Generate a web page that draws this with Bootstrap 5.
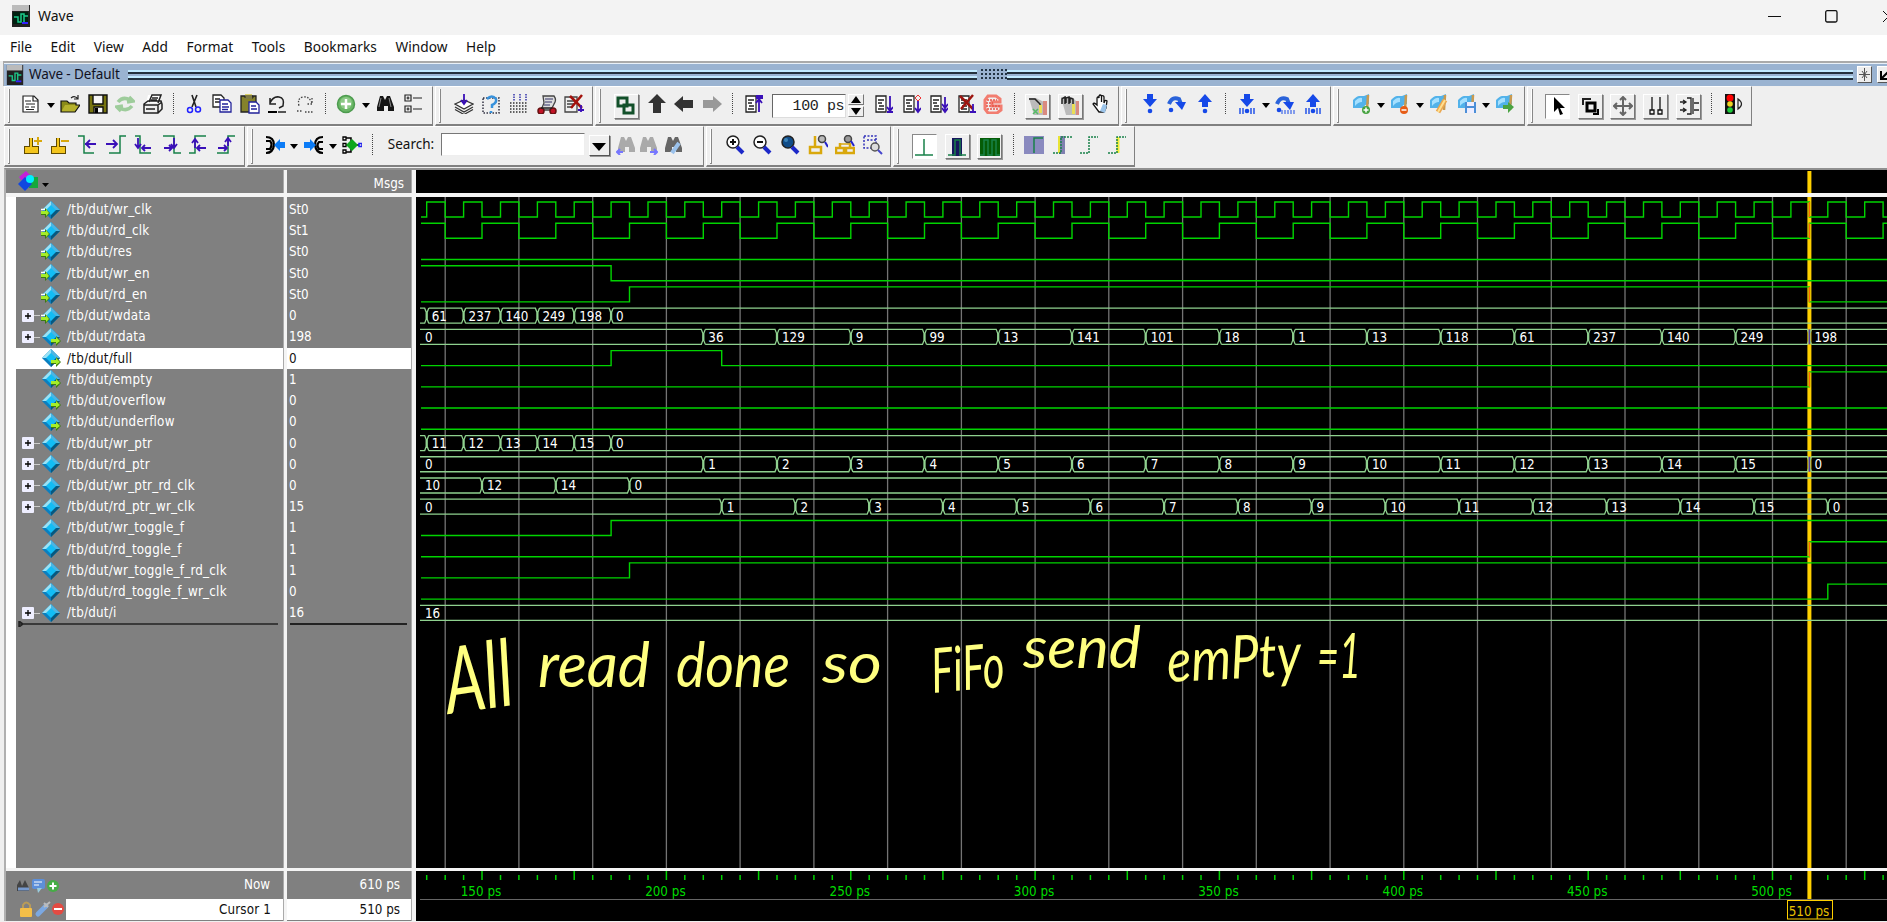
<!DOCTYPE html>
<html lang="en">
<head>
<meta charset="utf-8">
<title>Wave</title>
<link href="https://cdn.jsdelivr.net/npm/bootstrap@5.3.0/dist/css/bootstrap.min.css" rel="stylesheet">
<script src="https://cdn.jsdelivr.net/npm/bootstrap@5.3.0/dist/js/bootstrap.bundle.min.js"></script>
<style>
html,body{height:100%}
body{font:14px/1 "Noto Sans","Open Sans",sans-serif;color:#111;background:#efefef;overflow:hidden}
svg{display:block;flex:none}
.titlebar{height:35px;background:#f3f3f3;padding:0 0 3px 12px}
.titlebar .caption{font-size:14px;margin-left:8px}
.winbtns{gap:44px;margin-right:-8px}
.menus{height:26px;background:#fff;padding:0 0 2px 10px;gap:18.5px;font-size:13.7px;letter-spacing:.04px}
.dock{height:25px;border-top:2px solid #aaa;background:#9ab3d1;margin-left:3px;border-left:1px solid #aaa;box-shadow:inset 0 1px #e8f0f8}
.dock .dtitle{font-size:13.5px;color:#112;letter-spacing:-.1px;margin:0 7px 0 5px;width:92px;white-space:nowrap}
.grooves{height:10px;background:linear-gradient(#c2eaff 0 2px,#24313d 2px 4px,#9ab3d1 4px 6px,#c2eaff 6px 8px,#24313d 8px 10px)}
.dots{width:26px;height:11px;background:radial-gradient(circle at 1px 1px,#234 1px,transparent 1.2px) 0 0/4px 4px}
.mini{width:15px;height:17px;background:#eee;border:1px solid;border-color:#fff #555 #555 #fff}
.toolrow{height:40px;margin-left:4px;gap:2px}
.tbar{border:1px solid;border-color:#fff #808080 #808080 #fff;border-bottom-width:2px;padding-bottom:3px;position:relative}
.tbar::before{content:"";position:absolute;left:3px;top:2px;bottom:1px;width:2px;border-right:1px solid #888;border-bottom:1px solid #888;background:#fff}
.cell{width:27.6px;display:flex;justify-content:center;flex:none}
.cell.half{width:22px}
.drop{width:11px;flex:none;display:flex;justify-content:center}
.drop i,.combo i{border:4px solid transparent;border-top:5px solid #000;border-bottom:0;margin-top:3px}
.vsep{width:14px;flex:none;height:22px;background:repeating-linear-gradient(#444 0 1px,#efefef 1px 2px) center/1px 100% no-repeat}
.bcell{width:32.8px;flex:none;display:flex;justify-content:center;margin-top:4px}
.bcell span{width:25px;height:25px;border:1px solid;border-color:#fff #777 #777 #fff;box-shadow:1px 1px #999;display:grid;place-items:center}
.bcell.on span{background:#fff;border-color:#888 #fff #fff #888;box-shadow:none}
.timebox{width:74px;height:24px;margin:4px 2px 0 5px;background:#fff;border:1px solid;border-color:#666 #ddd #ddd #666;font:15px/23px "Liberation Mono",monospace;text-align:right;padding-right:1px;letter-spacing:-.4px;color:#222}
.spin{width:16px;margin:3px 5px 0 0;gap:1px}
.spin b{height:11px;border:1px solid;border-color:#fff #777 #777 #fff;display:grid;place-items:center}
.searchbox{width:144px;height:23px;background:#fff;border:1px solid;border-color:#777 #eee #eee #777}
.combo{width:21px;height:21px;margin:2px 5px 0 4px;border:1px solid;border-color:#fff #555 #555 #fff;box-shadow:1px 1px #999;display:grid;place-items:center}
.combo i{border-width:8px 7px 0!important;margin:2px 0 0}
.panes{margin-left:4px;height:753px;border-top:2px solid #909090;border-left:2px solid #b0b0b0;display:grid;grid-template-columns:278px 3px 125px 4px 1fr;grid-template-rows:23px 4px 671px 3px 50px;background:#f4f4f4}
.sig{font-family:"DejaVu Sans Condensed","DejaVu Sans",sans-serif;font-size:13.3px;color:#fff}
.g{background:#808080}
.sigrow{height:21.24px;padding-left:6px}
.sigrow .pm{width:12px;height:12px;background:#eef;border-radius:1px;display:grid;place-items:center}
.sigrow .link{width:6px;height:1px;background:#ccc}
.sigrow .nm{margin-left:6px;white-space:nowrap;letter-spacing:.22px}
.sel{background:#fff;color:#111}
.valrow{height:21.24px;padding-left:2px;letter-spacing:-.1px}
.endline{height:2px;background:#222}
.ed{border-right:1px solid #aaa}
</style>
</head>
<body>
<div class="d-flex flex-column">
<header class="titlebar d-flex align-items-center">
<svg width="18" height="22" viewBox="0 0 18 22"><path d="M0 0h18v22H0z" fill="#222"/><path d="M0 0h17v6H0z" fill="#bbb"/><path d="M1 7h15v12H1z" fill="#021"/><path d="M2 12h4v5h3V9h3v8M12 11h4" stroke="#1cc98a" stroke-width="1.500" fill="none"/><path d="M10 18h6" stroke="#32f" stroke-width="2"/></svg>
<span class="caption">Wave</span>
<div class="winbtns d-flex align-items-center ms-auto"><svg width="13" height="13"><path d="M0 6.5h13" stroke="#111"/></svg><svg width="13" height="13"><rect x=".7" y=".7" width="11.3" height="11.3" rx="1.5" fill="none" stroke="#111" stroke-width="1.3"/></svg><svg width="13" height="13"><path d="M1 1l11 11M12 1L1 12" stroke="#111"/></svg></div>
</header>
<nav class="menus d-flex align-items-center"><span>File</span><span>Edit</span><span>View</span><span>Add</span><span>Format</span><span>Tools</span><span>Bookmarks</span><span>Window</span><span>Help</span></nav>
<div class="dock d-flex align-items-center">
<svg width="18" height="20" viewBox="0 0 18 22" style="margin-left:2px"><path d="M0 0h18v22H0z" fill="#222"/><path d="M0 0h17v6H0z" fill="#bbb"/><path d="M2 12h4v5h3V9h3v8M12 11h4" stroke="#1cc98a" stroke-width="1.500" fill="none"/><path d="M10 18h6" stroke="#32f" stroke-width="2"/></svg>
<span class="dtitle">Wave - Default</span><div class="grooves" style="width:849px"></div><div class="dots ms-1"></div><div class="grooves flex-grow-1"></div>
<div class="mini ms-1"><svg width="13" height="15"><path d="M6.500 1v13M1 7.500h11M4 4l5 7M9 4l-5 7" stroke="#555"/></svg></div><div class="mini" style="margin:0 -5px 0 5px"><svg width="13" height="15"><path d="M3 4v8h7M4 11l8-8" stroke="#000" stroke-width="2" fill="none"/></svg></div>
</div>
<div class="toolrow d-flex" id="row1"></div>
<div class="toolrow d-flex" id="row2" style="height:41px"></div>
<main class="panes" style="margin-top:1px">
<div class="g ed d-flex align-items-center"><svg class="ms-2" style="margin-left:12px!important" width="34" height="21"><path d="M1 6l7-6 6 6-4 3H3z" fill="#c320d8"/><path d="M12 6h8v11h-9z" fill="#14a83c"/><path d="M7 6l7 7-7 7-7-7z" fill="#1048e0"/><circle cx="12" cy="8" r="4" fill="#0ef"/><path d="M24 12h7l-3.500 4z"/></svg></div><div></div>
<div class="g ed sig d-flex align-items-center justify-content-end pt-1" style="padding-right:7px">Msgs</div><div></div>
<svg id="head" width="1471" height="23" viewBox="416 170 1471 23"></svg>
<div></div><div></div><div></div><div></div><div></div>
<div class="g ed sig" style="border-left:10px solid #fff" id="names"></div><div></div>
<div class="g ed sig" id="vals"></div><div></div>
<svg id="wave" width="1471" height="671" viewBox="416 197 1471 671"></svg>
<div></div><div></div><div></div><div></div><div></div>
<div class="g ed sig d-flex flex-column"><div class="d-flex align-items-center justify-content-between" style="height:28px;padding:0 13px 0 11px"><svg width="44" height="17"><path d="M0 12V8l3-5 2 6 3-6 4 8v3H0z" fill="#444"/><path d="M1 12h11" stroke="#79c" stroke-width="3"/><rect x="15" y="2" width="13" height="10" rx="2" fill="#5d8fd8"/><path d="M17 5h8M17 8h5" stroke="#fff"/><path d="M20 11h5l-4 5z" fill="#9cd"/><circle cx="36" cy="9" r="6" fill="#46ad46"/><path d="M36 5.500v7M32.500 9h7" stroke="#fff" stroke-width="2"/></svg><span>Now</span></div>
<div class="d-flex" style="height:21px"><svg width="60" height="21"><path d="M17 10V6q3-5 7 0v4" stroke="#b99b57" fill="none" stroke-width="2"/><rect x="14" y="9" width="12" height="9" rx="1" fill="#f4be48"/><path d="M32 15l8-8" stroke="#7ba8e2" stroke-width="5" stroke-linecap="round"/><path d="M38 8l6-5M38 4l4 4" stroke="#bbb" stroke-width="2"/><circle cx="52" cy="10" r="6" fill="#e34a42"/><path d="M48 10h8" stroke="#fff" stroke-width="2"/></svg><div class="sel flex-grow-1 d-flex align-items-center justify-content-end" style="padding-right:12px;letter-spacing:.15px">Cursor 1</div></div></div><div></div>
<div class="g ed sig d-flex flex-column"><div class="d-flex align-items-center justify-content-end" style="height:28px;padding-right:11px">610 ps</div><div class="sel d-flex align-items-center justify-content-end" style="height:21px;padding-right:11px">510 ps</div></div><div></div>
<svg id="ruler" width="1471" height="50" viewBox="416 871 1471 50"></svg>
</main>
</div>
<script>
const P=(d,c='#000',w=1.5,f='none')=>`<path d="${d}" stroke="${c}" stroke-width="${w}" fill="${f}"/>`;
const F=(d,c='#000')=>`<path d="${d}" fill="${c}"/>`;
const C=(x,y,r,c,s='none')=>`<circle cx="${x}" cy="${y}" r="${r}" fill="${c}" stroke="${s}" stroke-width="1.5"/>`;
const doc=F('M3 2h11v16H3z','#fff')+P('M3 2h10v16H3zM5 6h6M5 9h4M6 12h5M5 15h6','#222',1.3);
const flag=F('M1 6q4-4 6-4h5l5-2v10q-4 0-6 4H1z','#52b2ea')+F('M3 7q4-4 7-3v4q-4 0-7 4z','#a5e0ff')+P('M16 1l-1 15','#c99a50',2.500);
const binoc=c=>F('M5 2h3l2 4 2-4h3l4 11v4h-6v-5h-4v5H2v-4z',c);
const yel='#d9a80c';
const pin=(m)=>P('M8 3v10M3 13h11v4H3z','#5f4a00',4)+P('M8 3v10M3 13h11v4H3z','#f3c51d',2,'#f3c51d')+m;
const mag=(f,m)=>C(8,7,6,f,'#222')+P('M12 12l6 6','#1c28c8',4)+m;
const gl=(d)=>P(d,'#18814a',1.5);
const ar=(d)=>P(d,'#3a10b8',1.800);
const I={
new:F('M2 2h11l4 4v12H2z','#fff')+P('M2 2h11l4 4v12H2zM12 2v5h5M4 7h6M5 10h9M4 13h4M10 13h4M5 15.500h8','#222',1.2),
open:F('M1 7h6l2 2h7v9H1z','#8a8a18')+F('M5 11h15l-5 7H1z','#b5b12c')+P('M1 18V7h6l2 2h7v2h4l-5 7z','#111',1.2)+P('M11 4q4-3 7 1M18 1v4h-4','#222',1.2),
save:F('M1 1h18v18H1z','#777510')+F('M5 1h10v9H5zM6 13h9v6H6z','#f6f6f6')+P('M1 1h18v18H1zM5 1v9h10V1M6 19v-6h9v6','#111',1.4)+F('M7 14h3v5H7z'),
refresh:P('M3 8q5-6 12-2M14 3l4 4-6 1M17 12q-5 6-12 2M6 17l-4-4 6-1','#9ecc9b',3.500),
print:F('M5 1h12l-3 8H3z','#fff')+P('M6 8l3-7h9l-3 8M1 10l4-3h13l1 3v5l-4 4H1zM1 11h14l4-3M15 11v8M3 15h9M9 4h6M8 6h6','#222',1.5),
cut:P('M8 1l4 12M13 1L8 13','#222',1.6)+C(6,16,2.500,'none','#22f')+C(14,15.500,2.500,'none','#22f'),
copy:F('M1 1h8l3 3v9H1z','#fff')+P('M1 1h8l3 3v9H1zM3 5h5M3 8h7','#222',1.3)+F('M8 6h8l3 3v9H8z','#fff')+P('M8 6h8l3 3v9H8zM10 10h6M10 13h7M10 15.500h6','#22229a',1.3),
paste:F('M1 2h15v16H1z','#85822b')+P('M1 2h15v16H1z','#222',1.3)+F('M5 0h7v5H5z','#ddd36a')+P('M5 4h8V2H5z','#222',1)+F('M9 8h7l3 3v8H9z','#fff')+P('M9 8h7l3 3v8H9zM11 12h5M11 15h6','#22229a',1.3),
undo:P('M3 9q3-7 9-6t4 9l-4 2M3 4v6h6','#222',1.500)+P('M1 18h9','#000',2)+P('M11 18h8','#222',1.5),
redo:`<g stroke-dasharray="1.5 1.500">${P('M17 9q-3-7-9-6t-4 9M17 4v6h-6M2 17h6M10 18h9','#444',1.3)}</g>`,
add:C(10,10,8.500,'#69b665','#4c9b4e')+C(10,9,6,'#8cc987')+P('M10 5v10M5 10h10','#fff',2.500),
find:binoc('#151515')+P('M6 4L4 13M14 4l2 9','#888',1),
tree:P('M2 1h6v6H2zM2 12h6v6H2zM5 2.500v3M3.500 4h3M5 13.500v3M3.500 15h3M10 4h9M10 15h9','#222',1.2),
stack:F('M1 11l9-4 9 4-9 5z','#fff')+P('M1 10l9-4 9 4-9 5zM1 13l9 5 9-5M1 15.500l9 5 9-5','#333',1.2)+ar('M10 0v9M7 6l3 4 3-4'),
q:`<g stroke-dasharray="1.500 1.5">${P('M2 4h16v15H2z','#334',1.5)}</g>`+P('M6 5q5-5 9 0 1 4-4 6v3M10 17v2','#3892dc',2.500),
grid:`<g stroke-dasharray="1.500 1.5">${P('M1 9h18M1 12h18M1 15h18M1 18h18','#333',1.5)}</g>`+`<g stroke-dasharray="1.5 1">${P('M5 0v7M11 0v7M17 0v7','#33a',1.5)}</g>`,
scope:P('M6 2h11q3 4 0 8l-3 6H4l3-7z','#444',1.3,'#ddd')+P('M8 5h8M8 8h7M7 11h6','#336',1)+C(4,17,3,'#c31326','#611')+C(16,17,3,'#c31326','#611')+P('M4 14h11','#222',1.5),
kill:P('M1 3h12v15H1zM3 7h8M3 10h8M3 13h6','#444',1.3)+P('M6 2l12 12M18 1L7 14','#a3120c',2.500)+ar('M17 11v7M14 16h6'),
chain:P('M2 2h9v8H2zM8 9h9v8H8z','#12502a',3),
up:F('M10 0l9 9h-5v10H6V9H1z','#333'),left:F('M0 10l9-8v4h10v8H9v4z','#333'),right:F('M20 10l-9-8v4H1v8h10v4z','#999'),
d1:doc+ar('M16 4v14M13 4h7M13 2h7M13 9l3-4 3 4'),d2:doc+ar('M17 2v14M14 13l3 4 3-4M14 18h6'),d3:doc+ar('M17 7v10M14 14l3 4 3-4')+P('M17 1l3 3-3 3-3-3z','#e33',1),d4:doc+ar('M17 3v14M14 10l3 4 3-4M14 14l3 4 3-4'),d5:doc+P('M4 2l13 13M17 1L5 15','#9d1510',2.500)+ar('M17 10v8M14 18h6'),
stop:P('M5 2h8l4 3v3H9v4h9v4l-4 3H5l-3-4V6z','#f27d70',3)+`<g stroke-dasharray="2 1">${P('M4 6h10M3 9h7M3 12h14M4 15h12','#e75448',1.500)}</g>`,
ph1:F('M1 2h7l10 5v12H6z','#bbb')+P('M1 3h6l5 5v6','#222',1.500)+F('M11 9h3v8h-3z','#eade55')+F('M15 5h4v14h-4z','#d98a80')+P('M5 13l5 5M10 13l-5 5','#5b6',1.5),
ph2:F('M1 1h11l6 6v12H6z','#bbb')+P('M2 8V3l3-2v7M6 7V2l3-1v7M10 7V2l3 1v10','#222',1.500)+F('M12 8h3v10h-3z','#eade55')+F('M16 5h3v14h-3z','#d98a80'),
hand:F('M5 10V4l2-1 1 5V1h2l1 7 1-6 2 1v7l1-3h2l-1 8-3 4H8l-6-8 2-1z','#fff')+P('M6 11V4q1-2 2 0V2q1-2 2.500 0V8 2q2-1 2.500 1v6q1-4 3-2l-1 7-2 4H8l-6-8q1-2 4 1z','#111',1.3)+F('M9 17l3-7 4 1-2 8z','#9bc4ea'),
sin:F('M7 0h6v5h4l-7 8-7-8h4z','#1649e8')+C(10,17,2.300,'#1649e8'),
sover:P('M2 10Q5 2 12 5l2 5','#2a63da',4)+F('M8 8h11l-4 8z','#1649e8')+C(4,16,2.300,'#1649e8'),
sout:F('M10 0l7 8h-4v5H7V8H3z','#1649e8')+C(10,17,2.300,'#1649e8'),
f1:flag+C(14,16,4,'#47a341')+P('M14 13.500v5M11.500 16h5','#fff',1.5),f2:flag+C(14,16,4,'#e65c16')+P('M11.500 16h5','#fff',1.5),f3:flag+P('M16 6L9 18','#eba64e',5)+P('M16 6L9 18','#ffe090',2),f4:flag+F('M8 8h11v11H8z','#4c8fd7')+F('M10 8h7v4h-7zM10 14h7v5h-7z','#eef'),f5:flag+F('M8 11h5V8l6 5-6 6v-4H8z','#4aa342'),
cur:F('M7 1v15l4-4 2 7 3-1-3-6h5z'),sel:P('M3 9V3h8','#222',2)+P('M7 7h8v8H7z','#000',3)+P('M13 18h5v-5','#000',2),
pan:P('M10 1v18M1 10h18M7 4l3-3 3 3M7 16l3 3 3-3M4 7l-3 3 3 3M16 7l3 3-3 3','#666',2),
two:P('M6 1v13M14 1v13M4 14h4v4H4zM12 14h4v4h-4z','#111',1.3),
ed:P('M1 6h5M1 14h5M4 4l3 2-3 2M4 12l3 2-3 2M8 2h4v16H8M14 2v16M15 7h5M15 14h5','#222',1.300),
light:F('M2 0h10v20H2z','#111')+C(7,4,3.500,'red')+C(7,10,2.800,'#edd421')+C(7,16,2.800,'#1dcc3c')+P('M15 5q7 5 0 10z','#222',1.2),
p1:pin(P('M11 6h8M15 2v8',yel,2)),p2:pin(P('M11 6h8',yel,2)),
e1:gl('M0 1h6v17h10')+ar('M7 9h11M12 5L8 9l4 4'),e2:gl('M20 1h-6v17H3')+ar('M0 9h11M7 5l4 4-4 4'),e3:gl('M2 1h5v17h11')+ar('M5 3v9M2 9l3 4 3-4M18 13H9M12 10l-3 3 3 3'),e4:gl('M2 1h11v17h7')+ar('M13 3v9M10 9l3 4 3-4M3 13h8M8 10l3 3-3 3'),e5:gl('M1 18h6V1h11')+ar('M7 13V5M4 8l3-4 3 4M18 13H9M12 10l-3 3 3 3'),e6:gl('M1 18h11V1h7')+ar('M12 11V4M9 7l3-4 3 4M2 13h8M8 10l3 3-3 3'),
m1:P('M1 2q8 0 8 8-1 8-8 8M1 6h4q3 3 0 8H1','#000',2.200)+F('M9 10l6-6v3h5v6h-5v3z','#0c7cf6'),m2:P('M20 2q-8 0-8 8 1 8 8 8M20 7h-4q-3 3 0 7h4','#000',2.200)+F('M13 10L7 4v3H1v6h6v3z','#0c7cf6'),
m3:P('M9 4v12M2 3h7v3M1 10h5M2 17h7v-3M13 10h4','#000',1.500)+P('M1 2h3v3H1zM1 8.500h3v3H1zM1 15h3v3H1z','#000',1.300,'#fff')+F('M10 4l6 6-6 6-6-6z','#0fa61e')+P('M17 8.500h3v3h-3z','#22e',1.5),
fb:binoc('#aaa')+P('M1 17h6M4 14l-3 3 3 3','#77f',2),ff:binoc('#aaa')+P('M12 17h7M16 14l3 3-3 3','#77f',2),fo:binoc('#666')+P('M16 8L9 18','#9bc2ec',4),
z1:mag('#fff',P('M5 7h6M8 4v6','#111',2)),z2:mag('#fff',P('M5 7h6','#111',2)),z3:mag('#104c88',C(6,5,2,'#3b83b8')),
z4:P('M7 1v11M2 12h11v6H2z',yel,2.500)+C(14,4,3.500,'#bbb','#444')+P('M17 7l3 5','#22c',2),z5:P('M5 8v5M15 8v5M1 13h8v5H1zM11 13h8v5h-8z',yel,2.500)+P('M5 9h10',yel,1.500)+C(13,4,3.500,'#999','#444')+P('M16 6l3 5','#22c',2),z6:`<g stroke-dasharray="2 1.500">${P('M1 1h12v12H1zM4 5h9','#33b',1.500)}</g>`+C(12,12,4,'#ddd','#555')+P('M15 15l4 4','#44c',2),
w1:gl('M1 18h18M10 2v16'),w2:F('M5 1h10v18H5z','#17175e')+gl('M1 18h7V3h5v15h6'),w3:F('M0 1h20v18H0z','#055c07')+gl('M0 18h4V3h4v15h4V3h4v15h4'),
w4:F('M0 1h20v18H0z','#8a8abf')+gl('M10 18V3h9'),w5:F('M7 1h6v18H7z','#8080b0')+P('M7 1v17','#e8e436',2)+`<g stroke-dasharray="2 1">${gl('M1 18h8V2h11')}</g>`,w6:`<g stroke-dasharray="2 1">${gl('M1 18h9V2h9')}</g>`,w7:P('M11 2v16','#f1ee36',3)+`<g stroke-dasharray="2 1">${gl('M1 18h9V2h9')}</g>`
};
const comb='<path d="M3 14v6M6 14v6M14 14v6M17 14v6" stroke="#1649e8" stroke-width="1.400"/>';
I.cin=I.sin+comb;I.cover=I.sover+'<path d="M7 16v4M10 16v4M13 16v4M16 16v4M19 16v4" stroke="#1649e8"/>';I.cout=I.sout+comb;
const svg=n=>`<svg width="20" height="20" viewBox="0 0 20 20">${I[n]}</svg>`;
const html=t=>t==='v'?'<div class="drop"><i></i></div>':t==='|'?'<div class="vsep"></div>':
 t==='TIME'?'<div class="timebox">100 ps</div><div class="spin d-flex flex-column"><b><svg width="10" height="7"><path d="M0 7l5-7 5 7z"/></svg></b><b><svg width="10" height="7"><path d="M0 0l5 7 5-7z"/></svg></b></div>':
 t==='SEARCH'?'<span style="width:53px;margin-left:8px;font-size:13.500px">Search:</span><div class="searchbox"></div><div class="combo"><i></i></div>':
 t[0]==='['?`<div class="bcell"><span>${svg(t.slice(1))}</span></div>`:t[0]==='*'?`<div class="bcell on"><span>${svg(t.slice(1))}</span></div>`:
 t[0]==='~'?`<div class="cell half">${svg(t.slice(1))}</div>`:`<div class="cell">${svg(t)}</div>`;
const bar=(w,pad,items)=>`<div class="tbar d-flex align-items-center" style="width:${w}px;padding-left:${pad}px">${items.split(' ').map(html).join('')}</div>`;
row1.innerHTML=bar(429,12.7,'new v open save refresh print | cut copy paste undo redo | add v find tree')+bar(158,14,'stack q grid scope kill')+bar(524,14,'[chain up left right | d1 TIME d2 d3 d4 d5 stop | [ph1 [ph2 hand')+bar(210,14,'sin sover sout | cin v cover cout')+bar(192,14,'f1 v f2 v f3 f4 v f5')+bar(225,13,'*cur [sel [pan [two [ed | light');
row2.innerHTML=bar(241,14,'p1 p2 e1 e2 e3 e4 e5 e6')+bar(457,13,'m1 v m2 v m3 | SEARCH ~fb ~ff fo')+bar(185,14,'z1 z2 z3 z4 z5 z6')+bar(242,14,'*w1 [w2 [w3 | w4 w5 w6 w7');

// Signals: name, value, port kind, first level or bus value, then change times
const seq=(start,vals)=>vals.map((v,i)=>[start+20*i,v]);
const ck=(a,s,lv)=>{const r=[];for(let t=a;t<540;t+=s){r.push([t,lv]);lv=1-lv}return r};
const S=[['wr_clk','St0','in',0,ck(135,5,1)],['rd_clk','St1','in',1,ck(140,10,0)],['res','St0','in',0,[]],['wr_en','St0','in',1,[[185,0]]],['rd_en','St0','in',0,[[190,1],[510,0]]],
['wdata','0','in','',[[135,'61'],[145,'237'],[155,'140'],[165,'249'],[175,'198'],[185,'0']]],
['rdata','198','out','0',seq(210,'36 129 9 99 13 141 101 18 1 13 118 61 237 140 249 198'.split(' '))],
['full','0','out',0,[[185,1],[215,0]]],['empty','1','out',0,[[510,1]]],['overflow','0','out',0,[]],['underflow','0','out',0,[]],
['wr_ptr','0','','',[[135,'11'],[145,'12'],[155,'13'],[165,'14'],[175,'15'],[185,'0']]],
['rd_ptr','0','','0',seq(210,'1 2 3 4 5 6 7 8 9 10 11 12 13 14 15 0'.split(' '))],
['wr_ptr_rd_clk','0','','10',[[150,'12'],[170,'14'],[190,'0']]],
['rd_ptr_wr_clk','15','','0',seq(215,'1 2 3 4 5 6 7 8 9 10 11 12 13 14 15 0'.split(' '))],
['wr_toggle_f','1','',0,[[185,1]]],['rd_toggle_f','1','',0,[[510,1]]],['wr_toggle_f_rd_clk','1','',0,[[190,1]]],['rd_toggle_f_wr_clk','0','',0,[[515,1]]],['i','16','','16',[]]];
const gem=k=>`<svg width="21" height="20" viewBox="0 0 21 20">${F('M11 1l9 9-9 9-9-9z','#0a7fc0')+F('M11 1l-9 9h5l4-4z','#9be2f5')+F('M11 1l9 9h-5l-4-4z','#4cb5e2')+F('M20 10l-9 9v-5l4-4z','#07587f')+F('M11 5l5 5-5 5-5-5z','#12bdf5')}${k==='in'?F('M1 11h4V8l5 5-5 5v-3H1z','#3c7a10')+F('M1 11h5V9l3 4-3 3v-2H1z','#a5ee28')+P('M1 9.500h4','#fff',1.5):k==='out'?F('M11 12h5v-3l5 5-5 5v-3h-5z','#3c7a10')+F('M11 12h5v-2l4 4-4 3v-2h-5z','#a5ee28'):''}</svg>`;
names.innerHTML='<div style="height:2px"></div>'+S.map(s=>`<div class="sigrow d-flex align-items-center ${s[0]==='full'?'sel':''}">${typeof s[3]==='string'?'<span class="pm"><svg width="8" height="8"><path d="M4 1v6M1 4h6" stroke="#000" stroke-width="1.3"/></svg></span><span class="link"></span>':'<span style="width:18px"></span>'}${gem(s[2])}<span class="nm">/tb/dut/${s[0]}</span></div>`).join('')+'<svg width="270" height="6" style="margin-top:-3px"><path d="M3 0l4 3-4 3zM3 3h259" stroke="#222" fill="none" stroke-width="1.500"/></svg>';
vals.innerHTML='<div style="height:2px"></div>'+S.map(s=>`<div class="valrow d-flex align-items-center ${s[0]==='full'?'sel':''}">${s[1]}</div>`).join('')+'<div class="endline" style="margin:-1px 4px 0 3px"></div>';
const X=t=>+(666.4+(t-200)*3.687).toFixed(1);
let w='<rect x="416" y="197" width="1471" height="671"/>';
for(let t=140;t<540;t+=20)w+=`<path d="M${X(t)} 197v671" stroke="#747474" stroke-width="1.300"/>`;
const txt='font-family="DejaVu Sans Condensed, DejaVu Sans, sans-serif" font-size="13.3"';
w+=`<path d="M${X(510)} 197v671" stroke="#ffd000" stroke-width="4"/>`;
S.forEach((s,n)=>{
 const h=202+n*21.23,l=h+15;
 if(typeof s[3]==='number'){
  let d=`M421 ${s[3]?h:l}`;s[4].forEach(([t,v])=>d+=`H${X(t)}V${v?h:l}`);
  w+=P(d+'H1887','#00d400',1.400);
 }else{
  const e=[...s[4].map(a=>X(a[0]))];let d='',p=420;
  e.forEach(x=>{d+=`M${p} ${h}H${x-2}l1.500 4v7l-1.500 4H${p}M${x+2} ${h}l-1.500 4v7l1.500 4`;p=x+2});
  w+=P(d+`M${p} ${h}H1887M${p} ${l}H1887`,'#8fd18f',1.300);
  if(s[3])w+=`<text x="425" y="${h+12.500}" ${txt} fill="#fff">${s[3]}</text>`;
  s[4].forEach(([t,v])=>w+=`<text x="${X(t)+5}" y="${h+12.500}" ${txt} fill="#fff">${v}</text>`);
 }
 s[4].forEach(([t])=>{if(t===510)w+=P(`M${X(510)} ${h}V${l}`,typeof s[3]==='number'?'#ff6a00':'#5b3a9c',1.500)});
});
// Pen note left on the canvas
[['All',449,714,68,92,-8],['read',538,687,112,62,0],['done',676,687,114,62,0],['so',822,683,60,56,0],['FiFo',933,693,73,62,-5],['send',1023,668,118,58,0],['emPty',1168,682,134,60,-3],['=1',1317,678,44,62,0]]
.forEach(([s,x,y,len,fs,r])=>w+=`<text x="${x}" y="${y}" transform="rotate(${r} ${x} ${y})" textLength="${len}" lengthAdjust="spacingAndGlyphs" font-family="Lato,sans-serif" font-style="italic" font-size="${fs}" fill="#ffff80">${s}</text>`);
wave.innerHTML=w;
head.innerHTML=`<rect x="416" y="170" width="1471" height="23"/><path d="M${X(510)} 171v22" stroke="#ffd000" stroke-width="4"/>`;
let r='<rect x="416" y="871" width="1471" height="50"/><path d="M420 899.500h1467" stroke="#666"/>';
for(let t=135;t<=530;t+=5){r+=P(`M${X(t)} ${t%25?875:871}V880`,'#00d200',1.500);if(t%50===0)r+=`<text x="${X(t)-1}" y="896" ${txt} text-anchor="middle" fill="#00dc00">${t} ps</text>`}
r+=`<path d="M${X(510)} 871v28" stroke="#ffd000" stroke-width="4"/><rect x="1787.500" y="900.500" width="45" height="18.500" fill="#000" stroke="#ffd000"/><text x="1809" y="915.500" ${txt} text-anchor="middle" fill="#e8c000">510 ps</text>`;
ruler.innerHTML=r;
</script>
</body>
</html>
